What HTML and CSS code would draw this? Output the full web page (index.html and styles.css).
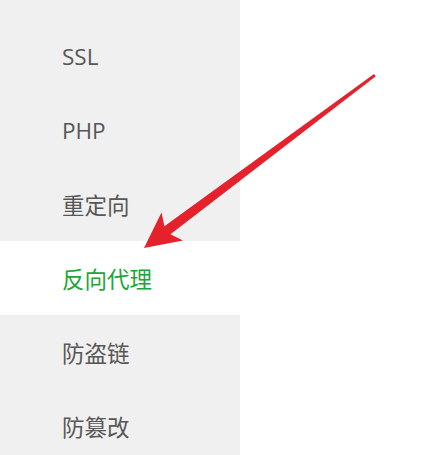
FILE: index.html
```html
<!DOCTYPE html>
<html lang="zh-CN">
<head>
<meta charset="utf-8">
<link rel="stylesheet" href="styles.css">
</head>
<body>
<div class="page">
  <ul class="menu">
    <li class="item">SSL</li>
    <li class="item">PHP</li>
    <li class="item">重定向</li>
    <li class="item active">反向代理</li>
    <li class="item">防盗链</li>
    <li class="item">防篡改</li>
  </ul>
  <svg class="arrow" width="422" height="455" viewBox="0 0 422 455">
    <polygon fill="#e5212b" points="144,248 161.5,212.5 164.4,226.2 374,73.9 375.8,76.3 170.4,234.2 183,240.5"/>
  </svg>
</div>
</body>
</html>
```

FILE: styles.css
```css
html, body {
  margin: 0;
  padding: 0;
  background: #ffffff;
}
.page {
  position: relative;
  width: 422px;
  height: 455px;
  overflow: hidden;
}
.menu {
  list-style: none;
  margin: 0;
  padding: 19px 0 0 0;
  width: 240px;
  height: 455px;
  box-sizing: border-box;
  background: #f0f0f0;
}
.item {
  height: 74px;
  box-sizing: border-box;
  padding: 0 0 0 62px;
  display: flex;
  align-items: center;
  font-family: "Open Sans", "Noto Sans CJK SC", sans-serif;
  font-size: 22.5px;
  color: #575757;
}
.item.active {
  background: #ffffff;
  color: #20a53a;
}
.arrow {
  position: absolute;
  left: 0;
  top: 0;
}
```
